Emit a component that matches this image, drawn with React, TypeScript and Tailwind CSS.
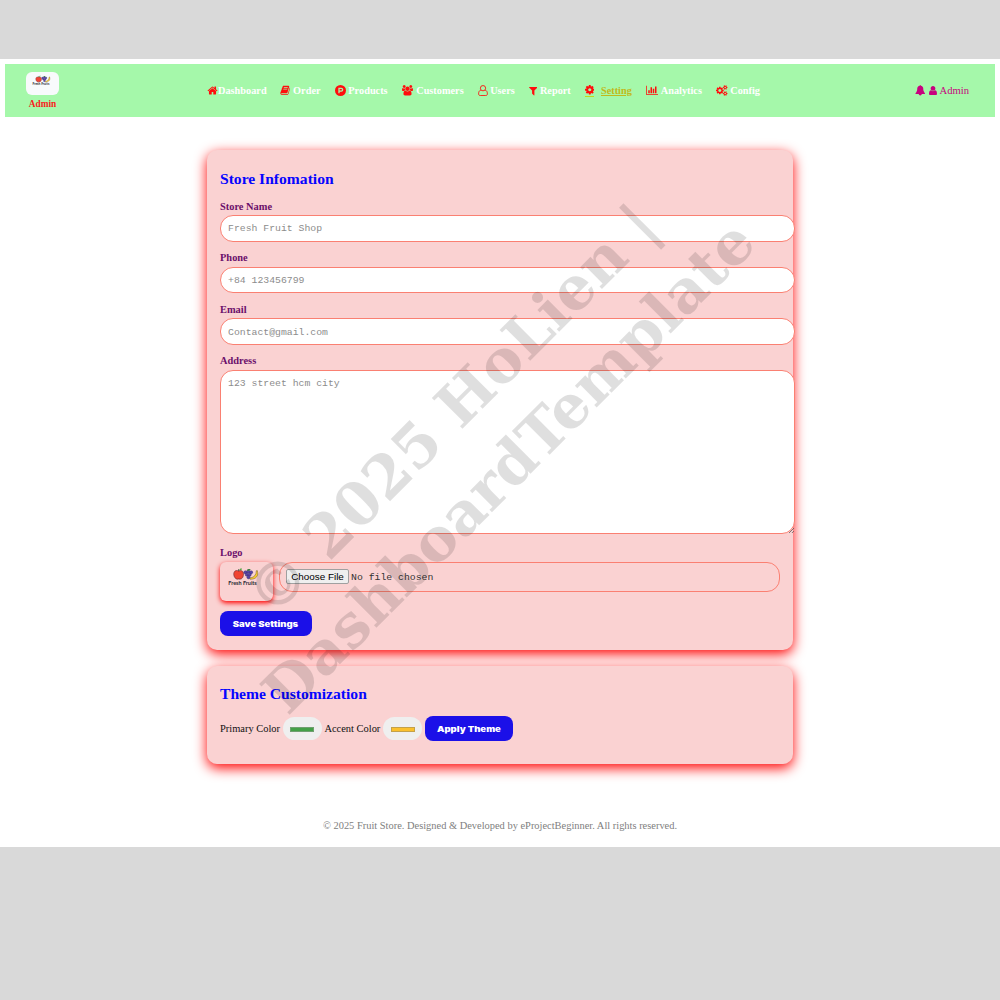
import React from "react";

const paths = {
  home: "M1472 992v480q0 26-19 45t-45 19h-384v-384h-256v384h-384q-26 0-45-19t-19-45v-480q0-1 .5-3t.5-3l575-474 575 474q1 2 1 6zm223-69l-62 74q-8 9-21 11h-3q-13 0-21-7l-692-577-692 577q-12 8-24 7-13-2-21-11l-62-74q-8-10-7-23.5t11-21.5l719-599q32-26 76-26t76 26l244 204v-195q0-14 9-23t23-9h192q14 0 23 9t9 23v408l219 182q10 8 11 21.5t-7 23.5z",
  book: "M1703 478q40 57 18 129l-275 906q-19 64-76.500 107.500t-122.500 43.500h-923q-77 0-148.500-53.500t-99.500-131.500q-24-67-2-127 0-4 3-27t4-37q1-8-3-21.500t-3-19.500q2-11 8-21t16.500-23.500 16.500-23.500q23-38 45-91.500t30-91.500q3-10 .5-30t-.5-28q3-11 17-28t17-23q21-36 42-92t25-90q1-9-2.500-32t.5-28q4-13 22-30.500t22-22.500q19-26 42.500-84.500t27.500-96.500q1-8-3-25.500t-2-26.500q2-8 9-18t18-23 17-21q8-12 16.500-30.500t15-35 16-36 19.500-32 26.500-23.500 36-11.500 47.500 5.500l-1 3q38-9 51-9h761q74 0 114 56t18 130l-274 906q-36 119-71.500 153.500t-128.500 34.500h-869q-27 0-38 15-11 16-1 43 24 70 144 70h923q29 0 56-15.500t35-41.500l300-987q7-22 5-57 38 15 59 43zm-1064 2q-4 13 2 22.500t20 9.500h608q13 0 25.500-9.500t16.500-22.500l21-64q4-13-2-22.500t-20-9.500h-608q-13 0-25.500 9.500t-16.500 22.500zm-83 256q-4 13 2 22.500t20 9.500h608q13 0 25.500-9.500t16.500-22.500l21-64q4-13-2-22.500t-20-9.500h-608q-13 0-25.500 9.500t-16.500 22.500z",
  users: "M593 896q-162 5-265 128h-134q-82 0-138-40.5t-56-118.5q0-353 124-353 6 0 43.5 21t97.5 42.5 119 21.5q67 0 133-23-5 37-5 66 0 139 81 256zm1071 637q0 120-73 189.5t-194 69.5h-874q-121 0-194-69.5t-73-189.5q0-53 3.5-103.5t14-109 26.5-108.5 43-97.5 62-81 85.5-53.5 111.5-20q10 0 43 21.5t73 48 107 48 135 21.5 135-21.5 107-48 73-48 43-21.5q61 0 111.5 20t85.5 53.5 62 81 43 97.5 26.5 108.5 14 109 3.5 103.5zm-1024-1277q0 106-75 181t-181 75-181-75-75-181 75-181 181-75 181 75 75 181zm704 384q0 159-112.5 271.5t-271.5 112.5-271.5-112.5-112.5-271.5 112.5-271.5 271.5-112.5 271.5 112.5 112.5 271.5zm576 225q0 78-56 118.5t-138 40.5h-134q-103-123-265-128 81-117 81-256 0-29-5-66 66 23 133 23 59 0 119-21.5t97.5-42.5 43.5-21q124 0 124 353zm-128-609q0 106-75 181t-181 75-181-75-75-181 75-181 181-75 181 75 75 181z",
  user: "M1536 1399q0 109-62.5 187t-150.5 78h-854q-88 0-150.5-78t-62.5-187q0-85 8.5-160.5t31.5-152 58.5-131 94-89 134.5-34.5q131 128 313 128t313-128q76 0 134.5 34.5t94 89 58.5 131 31.5 152 8.5 160.5zm-256-887q0 159-112.5 271.5t-271.5 112.5-271.5-112.5-112.5-271.5 112.5-271.5 271.5-112.5 271.5 112.5 112.5 271.5z",
  filter: "M1595 295q17 41-14 70l-493 493v742q0 42-39 59-13 5-25 5-27 0-45-19l-256-256q-19-19-19-45v-486l-493-493q-31-29-14-70 17-39 59-39h1280q42 0 59 39z",
  cog: "M1152 896q0-106-75-181t-181-75-181 75-75 181 75 181 181 75 181-75 75-181zm512-109v222q0 12-8 23t-20 13l-185 28q-19 54-39 91 35 50 107 138 10 12 10 25t-9 23q-27 37-99 108t-94 71q-12 0-26-9l-138-108q-44 23-91 38-16 136-29 186-7 28-36 28h-222q-14 0-24.5-8.5t-11.5-21.5l-28-184q-49-16-90-37l-141 107q-10 9-25 9-14 0-25-11-126-114-165-168-7-10-7-23 0-12 8-23 15-21 51-66.5t54-70.5q-27-50-41-99l-183-27q-13-2-21-12.5t-8-23.5v-222q0-12 8-23t19-13l186-28q14-46 39-92-40-57-107-138-10-12-10-24 0-10 9-23 26-36 98.5-107.5t94.5-71.5q13 0 26 10l138 107q44-23 91-38 16-136 29-186 7-28 36-28h222q14 0 24.5 8.5t11.5 21.5l28 184q49 16 90 37l142-107q9-9 24-9 13 0 25 10 129 119 165 170 7 8 7 22 0 12-8 23-15 21-51 66.5t-54 70.5q26 50 41 98l183 28q13 2 21 12.5t8 23.5z",
  bell: "M1728 1408q0 52-38 90t-90 38h-448q0 106-75 181t-181 75-181-75-75-181h-448q-52 0-90-38t-38-90q50-42 91-88t85-119.5 74.5-158.5 50-206 19.5-260q0-152 117-282.5t307-158.5q-8-19-8-39 0-40 28-68t68-28 68 28 28 68q0 20-8 39 190 28 307 158.5t117 282.5q0 139 19.5 260t50 206 74.5 158.5 85 119.5 91 88z",
  chart: "M640 896v512h-256v-512h256zm384-512v1024h-256v-1024h256zm1024 1152v128h-2048v-1536h128v1408h1920zm-640-896v768h-256v-768h256zm384-384v1152h-256v-1152h256z",
  cogs: "M896 896q0-106-75-181t-181-75-181 75-75 181 75 181 181 75 181-75 75-181zm768 512q0-52-38-90t-90-38-90 38-38 90q0 53 37.5 90.5t90.5 37.500 90.500-37.500 37.500-90.500zm0-1024q0-52-38-90t-90-38-90 38-38 90q0 53 37.5 90.5t90.5 37.5 90.5-37.5 37.5-90.5zm-384 421v185q0 10-7 19.500t-16 10.500l-155 24q-11 35-32 76 34 48 90 115 7 11 7 20 0 12-7 19-23 30-82.500 89.500t-78.500 59.500q-11 0-21-7l-115-90q-37 19-77 31-11 108-23 155-7 24-30 24h-186q-11 0-20-7.500t-10-17.500l-23-153q-34-10-75-31l-118 89q-7 7-20 7-11 0-21-8-144-133-144-160 0-9 7-19 10-14 41-53t47-61q-23-44-35-82l-152-24q-10-1-17-9.500t-7-19.500v-185q0-10 7-19.500t16-10.500l155-24q11-35 32-76-34-48-90-115-7-11-7-20 0-12 7-20 22-30 82-89t79-59q11 0 21 7l115 90q34-18 77-32 11-108 23-154 7-24 30-24h186q11 0 20 7.500t10 17.500l23 153q34 10 75 31l118-89q8-7 20-7 11 0 21 8 144 133 144 160 0 8-7 19-12 16-42 54t-45 60q23 48 34 82l152 23q10 2 17 10.500t7 19.500zm640 533v140q0 16-149 31-12 27-30 52 51 113 51 138 0 4-4 7-122 71-124 71-8 0-46-47t-52-68q-20 2-30 2t-30-2q-14 21-52 68t-46 47q-2 0-124-71-4-3-4-7 0-25 51-138-18-25-30-52-149-15-149-31v-140q0-16 149-31 13-29 30-52-51-113-51-138 0-4 4-7 4-2 35-20t59-34 30-16q8 0 46 46.500t52 67.500q20-2 30-2t30 2q51-71 92-112l6-2q4 0 124 70 4 3 4 7 0 25-51 138 17 23 30 52 149 15 149 31zm0-1024v140q0 16-149 31-12 27-30 52 51 113 51 138 0 4-4 7-122 71-124 71-8 0-46-47t-52-68q-20 2-30 2t-30-2q-14 21-52 68t-46 47q-2 0-124-71-4-3-4-7 0-25 51-138-18-25-30-52-149-15-149-31v-140q0-16 149-31 13-29 30-52-51-113-51-138 0-4 4-7 4-2 35-20t59-34 30-16q8 0 46 46.500t52 67.500q20-2 30-2t30 2q51-71 92-112l6-2q4 0 124 70 4 3 4 7 0 25-51 138 17 23 30 52 149 15 149 31z",
};

type Solid = keyof typeof paths;

function Glyph({ name, box = "0 0 1792 1792", className }: { name: Solid; box?: string; className: string }) {
  return (
    <svg viewBox={box} className={`shrink-0 fill-current ${className}`}>
      <path d={paths[name]} />
    </svg>
  );
}

function ProductIcon() {
  return (
    <svg viewBox="0 0 24 24" className="size-[11px] shrink-0">
      <circle cx="12" cy="12" r="12" fill="currentColor" />
      <path d="M8.700 18V7.500h5a3 3 0 0 1 0 6h-4" fill="none" stroke="#a5f8aa" strokeWidth="2.800" />
    </svg>
  );
}

function UserOutline() {
  return (
    <svg viewBox="0 0 18 20" className="h-[11px] w-[10px] shrink-0" fill="none" stroke="currentColor" strokeWidth="1.600">
      <circle cx="9" cy="5.800" r="4.800" />
      <path d="M5 9.500C2 10 1 13 1 16c0 2 1.200 3.200 3 3.200h10c1.800 0 3-1.200 3-3.200 0-3-1-6-4-6.500" />
    </svg>
  );
}

function FruitLogo({ className }: { className: string }) {
  return (
    <svg viewBox="0 0 34 20" className={className}>
      <path d="M12 3.200C8.500 1.500 6.300 4 6.800 7.300c.5 3.400 3 5.200 5.200 4.200 3 1 5-1.600 5-5 0-3.300-2.300-4.600-5-3.300z" fill="#f04432" stroke="#5b2230" strokeWidth=".6" />
      <path d="M12 3.300 11.700 1.300" stroke="#333" strokeWidth=".8" />
      <path d="M12.300 2.400c.8-1.900 2.300-2 3.200-1.700-.5 1.500-1.600 2-3.200 1.700z" fill="#58a646" />
      <g fill="#5a43a8" stroke="#2e2766" strokeWidth=".4">
        <circle cx="19" cy="4.500" r="1.700" />
        <circle cx="22" cy="3.800" r="1.700" />
        <circle cx="25" cy="4.500" r="1.700" />
        <circle cx="20.500" cy="7" r="1.700" />
        <circle cx="23.500" cy="7" r="1.700" />
        <circle cx="22.300" cy="9.800" r="1.700" />
      </g>
      <path d="M20.500 2.500c.5-1.700 2.600-1.800 4-1.300-.8 1.500-2.500 2-4 1.300z" fill="#3f7f43" />
      <path d="M31.500 2.600c1.800 5.200-.8 9.400-7.500 9.300-.5-.8-.3-1.300.5-1.500 4-.8 6-3.300 6-7.500z" fill="#f7c92e" stroke="#65521c" strokeWidth=".5" />
      <text x="1" y="18" textLength="30" lengthAdjust="spacingAndGlyphs" fontFamily="Lato, sans-serif" fontWeight="700" fontSize="5.200" fill="#2b2b33">
        Fresh Fruits
      </text>
    </svg>
  );
}

function NavItem({ icon, label, width }: { icon: React.ReactNode; label: string; width: string }) {
  return (
    <a className={`flex items-center text-[#ff0d0d] ${width}`}>
      {icon}
      <span className="ml-auto pt-px text-white">{label}</span>
    </a>
  );
}

const labelText = "block h-[15px] pt-[0.500px] text-[10.400px] leading-[12px] font-bold text-[#6b0f6b]";
const mono = "font-['Liberation_Mono',monospace] text-[9.800px]";

function Field({ label, placeholder }: { label: string; placeholder: string }) {
  return (
    <label className="block h-[51.650px] w-[575px]">
      <span className={labelText}>{label}</span>
      <input
        placeholder={placeholder}
        className={`block h-[26.500px] w-full rounded-[13px] border border-[#fa8072] bg-white px-[7px] pt-px placeholder:text-[#8c8c8c] placeholder:opacity-100 ${mono}`}
      />
    </label>
  );
}

function ColorSwatch({ children }: { children: React.ReactNode }) {
  return <span className="mx-[2.700px] flex h-[23px] w-[39px] items-center justify-center rounded-[12px] bg-[#efefef]">{children}</span>;
}

const card = "w-[586px] rounded-[10px] bg-[#fad2d2] pl-[13px] shadow-[0_4px_13px_red]";
const button = "flex h-[25px] items-center justify-center rounded-[8px] bg-[#1b10e8] text-white";
const buttonText = "origin-center scale-x-[1.190] pt-px font-['Inter',sans-serif] text-[8px] font-black whitespace-nowrap";

export default function App() {
  return (
    <div className="h-[1000px] w-[1000px] overflow-hidden bg-[#d9d9d9] pt-[59px] font-['Liberation_Serif',serif]">
      <div className="relative h-[788px] bg-white px-[5px] pt-[5px]">
        <header className="flex h-[53px] bg-[#a5f8aa] text-[10.300px]">
          <div className="ml-[21px] flex w-[33px] flex-col items-center pt-[8px]">
            <span className="flex h-[23px] w-[33px] justify-center rounded-[6px] bg-[#f8fafc] pt-[3px] pr-[3px]">
              <FruitLogo className="h-[12px] w-[19px]" />
            </span>
            <b className="mt-[3px] text-[9.300px] leading-[13px] text-[#f91c1c]">Admin</b>
          </div>
          <nav className="ml-[148px] flex w-[553px] items-center justify-between font-bold">
            <NavItem width="w-[58.500px]" label="Dashboard" icon={<Glyph name="home" className="size-[11px]" />} />
            <NavItem width="w-[41px]" label="Order" icon={<Glyph name="book" className="size-[10.500px]" />} />
            <NavItem width="w-[53px]" label="Products" icon={<ProductIcon />} />
            <NavItem width="w-[62px]" label="Customers" icon={<Glyph name="users" box="0 0 1920 1792" className="h-[10.500px] w-[11px]" />} />
            <NavItem width="w-[37px]" label="Users" icon={<UserOutline />} />
            <NavItem width="w-[42px]" label="Report" icon={<Glyph name="filter" box="192 128 1408 1600" className="h-[10px] w-[8.500px]" />} />
            <a className="flex w-[47px] items-center justify-between text-[#c1b91b] underline">
              <span className="flex h-[12px] items-center border-b border-[#c1d91b] text-[#ff0d0d]">
                <Glyph name="cog" box="128 128 1536 1536" className="size-[9.500px]" />
              </span>
              <span className="pt-px">Setting</span>
            </a>
            <NavItem width="w-[56px]" label="Analytics" icon={<Glyph name="chart" box="0 0 2048 1792" className="h-[10.500px] w-[12px]" />} />
            <NavItem width="w-[44px]" label="Config" icon={<Glyph name="cogs" box="0 0 1920 1792" className="h-[11px] w-[11.500px]" />} />
          </nav>
          <div className="mr-[26px] ml-auto flex items-center text-[#c7027e]">
            <Glyph name="bell" className="size-[10.500px]" />
            <Glyph name="user" box="256 128 1280 1536" className="mr-[3px] ml-[3.500px] h-[9.500px] w-[8px]" />
            <span className="pt-px text-[10.600px]">Admin</span>
          </div>
        </header>

        <main className="flex flex-col items-center gap-[16.500px] pt-[33px]">
          <section className={`h-[499.500px] pt-[19px] ${card}`}>
            <h2 className="h-[31px] pt-px text-[15.600px] leading-[18px] font-bold text-[#0505ff]">Store Infomation</h2>
            <Field label="Store Name" placeholder="Fresh Fruit Shop" />
            <Field label="Phone" placeholder="+84 123456799" />
            <Field label="Email" placeholder="Contact@gmail.com" />
            <label className="relative block h-[192px] w-[575px]">
              <span className={labelText}>Address</span>
              <textarea
                placeholder="123 street hcm city"
                className={`block h-[164px] w-full resize-none rounded-[13px] border border-[#fa8072] bg-white px-[7px] py-[6px] leading-[13px] placeholder:text-[#8c8c8c] placeholder:opacity-100 ${mono}`}
              />
              <svg viewBox="0 0 6 6" className="absolute top-[173px] right-[1px] size-[5px]" stroke="#555" strokeWidth=".9">
                <path d="M0 6 6 0M3.500 6 6 3.500" />
              </svg>
            </label>
            <div className={labelText}>Logo</div>
            <div className="flex h-[49px]">
              <div className="h-[39px] w-[53px] rounded-[6px] bg-[#fad2d2] pt-[6px] pl-[7px] shadow-[0_2px_5px_red]">
                <FruitLogo className="h-[19px] w-[33px]" />
              </div>
              <div className="ml-[6px] flex h-[30px] w-[501px] items-center rounded-[13px] border border-[#fa8072] pl-[6px]">
                <span className="flex h-[15px] w-[63px] items-center justify-center rounded-[2px] border border-[#a0a0a0] bg-[#efefef] font-['Liberation_Sans',sans-serif] text-[9.900px] whitespace-nowrap text-black">
                  Choose File
                </span>
                <span className={`ml-[2px] pt-[2px] text-[#333] ${mono}`}>No file chosen</span>
              </div>
            </div>
            <button className={`w-[91.500px] ${button}`}>
              <span className={buttonText}>Save Settings</span>
            </button>
          </section>

          <section className={`h-[98px] pt-[19px] ${card}`}>
            <h2 className="h-[31px] text-[15.600px] leading-[18px] font-bold text-[#0505ff]">Theme Customization</h2>
            <div className="flex h-[25px] items-center text-[10.450px] text-[#111]">
              Primary Color
              <ColorSwatch>
                <span className="mt-px h-[5px] w-[24px] border border-[#6f9f70] bg-[#43a047]" />
              </ColorSwatch>
              Accent Color
              <ColorSwatch>
                <span className="mt-px h-[5px] w-[24px] border border-[#c4a14a] bg-[#fbc02d]" />
              </ColorSwatch>
              <button className={`w-[88px] ${button}`}>
                <span className={buttonText}>Apply Theme</span>
              </button>
            </div>
          </section>
        </main>

        <footer className="pt-[55px] text-center text-[10.430px] leading-[14px] text-[#808080]">
          © 2025 Fruit Store. Designed &amp; Developed by eProjectBeginner. All rights reserved.
        </footer>

        <div className="pointer-events-none absolute top-[379px] left-[480px] w-[700px] -translate-x-1/2 -translate-y-1/2 -rotate-45 text-center font-['DejaVu_Serif',serif] text-[59.500px] leading-[80px] font-bold text-black/[0.125]">
          © 2025 HoLien |<br />
          DashboardTemplate
        </div>
      </div>
    </div>
  );
}
